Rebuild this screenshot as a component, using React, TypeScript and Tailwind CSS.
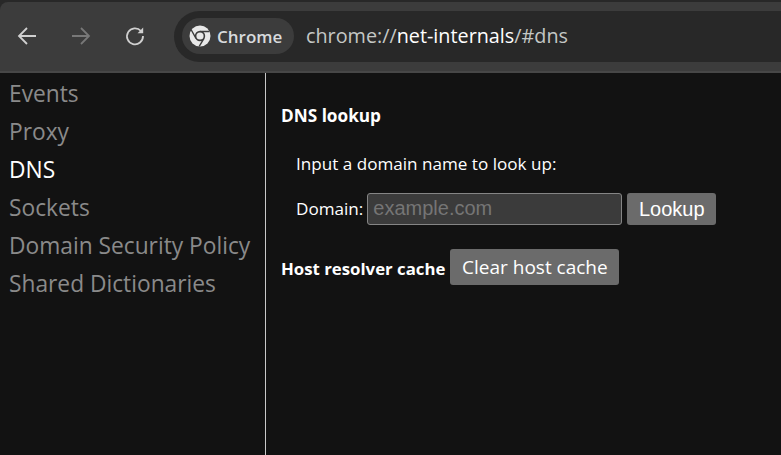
import React from "react";

const sans = "font-['Open_Sans','Noto_Sans',sans-serif]";

function Toolbar() {
  return (
    <div className="h-[73px] bg-[#282828] pt-[2px]">
      <div className="flex h-[71px] items-center border-b-2 border-[#474747] bg-[#3c3c3c] pb-[1px] rounded-tl-[8px]">
        <div className="flex w-[174px] shrink-0 items-center">
          <svg width="22" height="22" viewBox="0 0 22 22" className="ml-[16px]" fill="none" stroke="#d0d0d0" strokeWidth="1.8">
            <path d="M20 11H3M11 3l-8 8 8 8" />
          </svg>
          <svg width="22" height="22" viewBox="0 0 22 22" className="ml-[32px]" fill="none" stroke="#787878" strokeWidth="1.8">
            <path d="M2 11h17M11 3l8 8-8 8" />
          </svg>
          <svg width="22" height="22" viewBox="0 0 22 22" className="ml-[32px]" fill="none" stroke="#d0d0d0" strokeWidth="1.8">
            <path d="M17 6A8 8 0 1 0 19 11" />
            <path d="M19.2 2.6v5.6h-5.6z" fill="#d0d0d0" stroke="none" />
          </svg>
        </div>
        <div className="flex h-[51px] flex-1 items-center rounded-l-full bg-[#282828] pl-[8px]">
          <div className="flex h-[36px] w-[112px] items-center rounded-full bg-[#3c3c3c] pl-[7px]">
            <svg width="22" height="22" viewBox="0 0 22 22">
              <circle cx="11" cy="11" r="10.5" fill="#e8e8e8" />
              <path d="M11 6.5h9.5M7 13.3 2.3 5M15 13.3 10.2 21.4" stroke="#3c3c3c" strokeWidth="1.4" />
              <circle cx="11" cy="11" r="5.2" fill="#3c3c3c" />
              <circle cx="11" cy="11" r="3.6" fill="#e8e8e8" />
            </svg>
            <span className={`${sans} ml-[6px] text-[17px] leading-none font-semibold text-[#d8dadd]`}>Chrome</span>
          </div>
          <div className={`${sans} ml-[12px] text-[19.8px] leading-none text-[#c4c7c5]`}>
            chrome://<span className="text-white">net-internals</span>/#dns
          </div>
        </div>
      </div>
    </div>
  );
}

function Nav() {
  const items = ["Events", "Proxy", "DNS", "Sockets", "Domain Security Policy", "Shared Dictionaries"];
  return (
    <nav className="w-[266px] shrink-0 border-r border-[#c8c8c8] pl-[9px] pt-[2px]">
      {items.map((t) => (
        <div
          key={t}
          className={`${sans} h-[38px] text-[22.75px] leading-[38px] ${t === "DNS" ? "text-white" : "text-[#8a8a8a]"}`}
        >
          {t}
        </div>
      ))}
    </nav>
  );
}

function Main() {
  return (
    <main className={`${sans} flex-1 pl-[15px] pt-[31px] text-[17.1px] text-white`}>
      <h2 className="text-[17.2px] leading-[24px] font-bold">DNS lookup</h2>
      <p className="ml-[15px] mt-[24px] leading-[24px]">Input a domain name to look up:</p>
      <div className="ml-[15px] mt-[17px] flex items-center">
        <span className="leading-[32px]">Domain:</span>
        <input
          readOnly
          placeholder="example.com"
          className="ml-[4px] h-[32px] w-[255px] rounded-[3px] border border-[#858585] bg-[#3b3b3b] px-[5px] pb-[1px] font-['Liberation_Sans',sans-serif] text-[20px] text-white placeholder:text-[#757575] outline-none"
        />
        <button className="ml-[5px] h-[32px] w-[89px] rounded-[3px] bg-[#6b6b6b] pb-[1px] font-['Liberation_Sans',sans-serif] text-[20px] leading-none text-white">
          Lookup
        </button>
      </div>
      <div className="mt-[24px] flex items-center">
        <h2 className="mt-[3px] text-[16.8px] font-bold leading-[24px]">Host resolver cache</h2>
        <button className="ml-[5px] h-[36px] w-[169px] rounded-[3px] bg-[#6b6b6b] text-[19px] leading-none text-white">
          Clear host cache
        </button>
      </div>
    </main>
  );
}

export default function App() {
  return (
    <div className="flex h-[455px] w-[781px] flex-col overflow-hidden bg-[#121212]">
      <Toolbar />
      <div className="flex flex-1">
        <Nav />
        <Main />
      </div>
    </div>
  );
}
